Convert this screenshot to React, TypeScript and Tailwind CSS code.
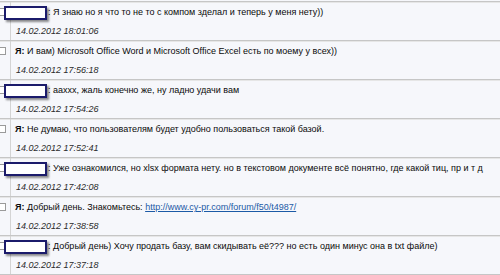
import React from "react";

type Msg = {
  me: boolean;
  text: React.ReactNode;
  date: string;
};

const messages: Msg[] = [
  { me: false, text: "Я знаю но я что то не то с компом зделал и теперь у меня нету))", date: "14.02.2012 18:01:06" },
  { me: true, text: "И вам) Microsoft Office Word и Microsoft Office Excel есть по моему у всех))", date: "14.02.2012 17:56:18" },
  { me: false, text: "аахxx, жаль конечно же, ну ладно удачи вам", date: "14.02.2012 17:54:26" },
  { me: true, text: "Не думаю, что пользователям будет удобно пользоваться такой базой.", date: "14.02.2012 17:52:41" },
  { me: false, text: "Уже ознакомился, но xlsx формата нету. но в текстовом документе всё понятно, где какой тиц, пр и т д", date: "14.02.2012 17:42:08" },
  {
    me: true,
    text: (
      <>
        Добрый день. Знакомьтесь:{" "}
        <a href="#" className="text-[#1c5aa6] underline">http://www.cy-pr.com/forum/f50/t4987/</a>
      </>
    ),
    date: "14.02.2012 17:38:58",
  },
  { me: false, text: "Добрый день) Хочу продать базу, вам скидывать её??? но есть один минус она в txt файле)", date: "14.02.2012 17:37:18" },
];

function Row({ m }: { m: Msg }) {
  return (
    <div className="relative flex h-[39px] border-t border-[#c6c6c6] shadow-[inset_0_1px_0_#e6e6e6]">
      <div className="w-[11px] shrink-0 border-r border-[#d4d4d4] pt-[6px]">
        <div className="ml-[-2px] h-[8px] w-[8px] border border-[#9a9a9a] bg-white" />
      </div>
      <div className="flex flex-col pl-[4px]">
        <div className="mt-[3px] h-[14px] leading-[14px] whitespace-nowrap text-[#0a0a0a]">
          {m.me ? <b>Я:</b> : <span className="inline-block w-[33px]" />}
          {m.me ? " " : ": "}
          {m.text}
        </div>
        <div className="mt-[5px] pl-[1px] italic text-[#2a2a2a] leading-[14px]">{m.date}</div>
      </div>
      {!m.me && (
        <div className="absolute left-[4px] top-[4px] h-[14px] w-[43px] border-2 border-[#1b1b6b] bg-white shadow-[2px_2px_2px_rgba(0,0,0,0.45)]" />
      )}
    </div>
  );
}

export default function App() {
  return (
    <div className="h-[275px] w-[500px] overflow-hidden bg-[#f6f7fb] pt-[1px] font-['Liberation_Sans',Arial,sans-serif] text-[9px]">
      {messages.map((m, i) => (
        <Row key={i} m={m} />
      ))}
      <div className="border-t border-[#c6c6c6]" />
    </div>
  );
}
